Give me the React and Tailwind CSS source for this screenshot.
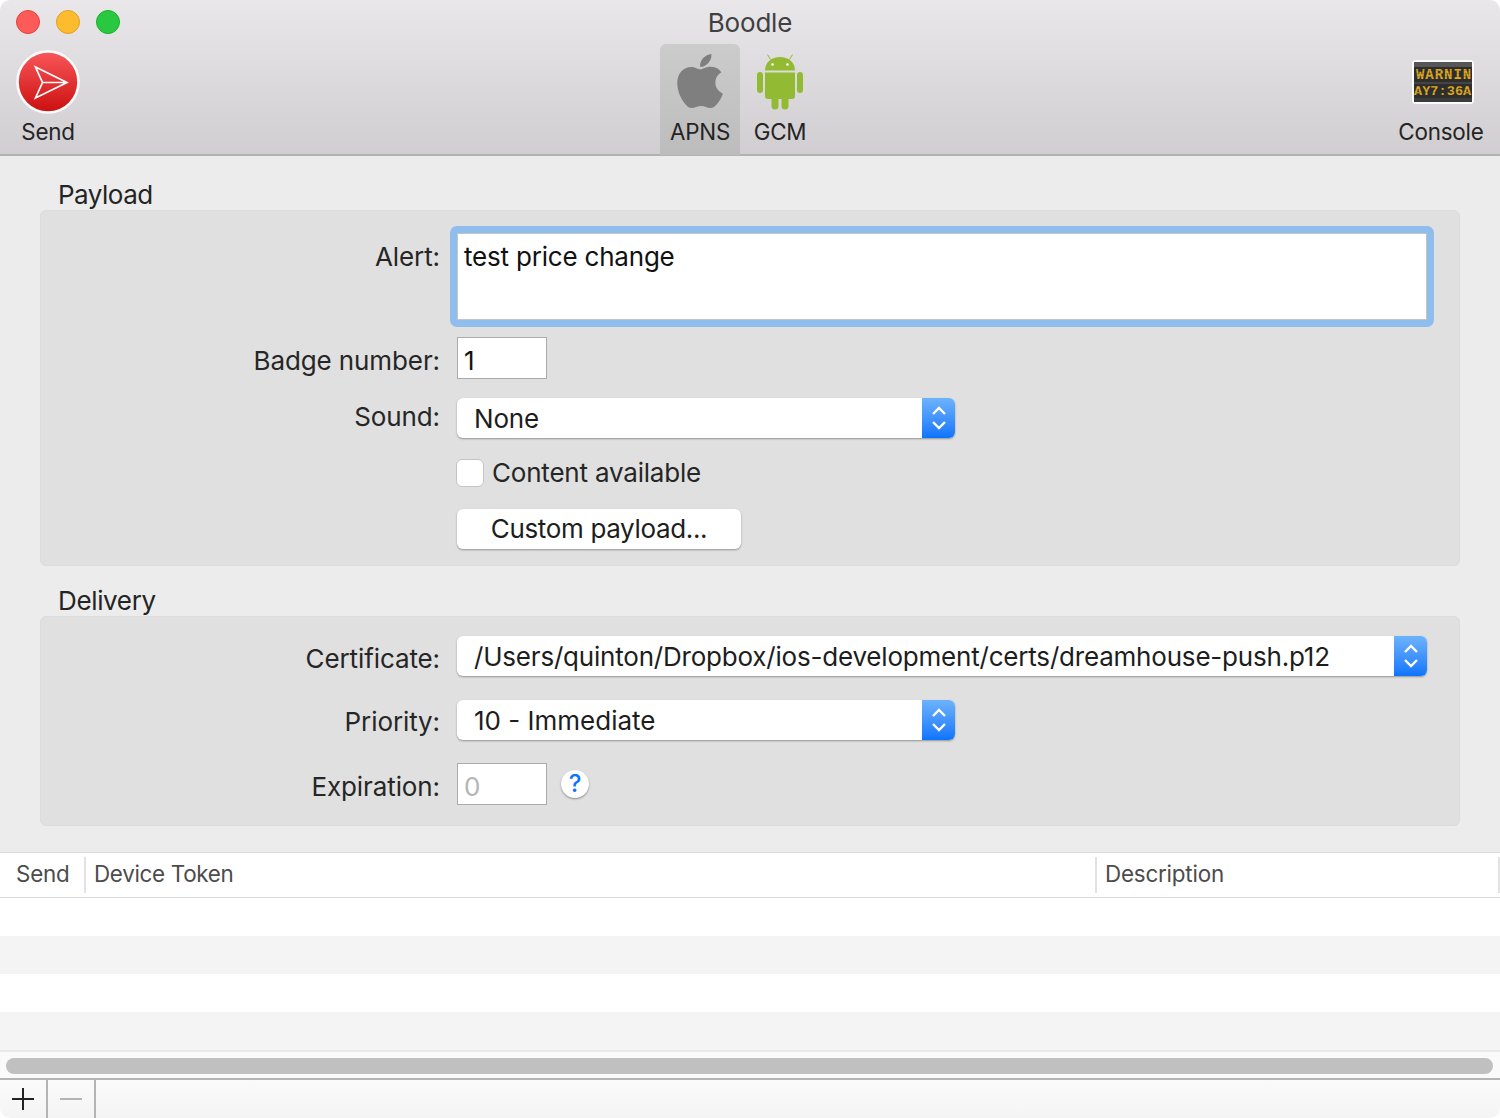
import React from 'react';
import { FaApple } from 'react-icons/fa';

function SendIcon() {
  return (
    <svg width="64" height="64" viewBox="0 0 64 64" className="block">
      <defs>
        <linearGradient id="sendRed" x1="0" y1="0" x2="0" y2="1">
          <stop offset="0" stopColor="#f9575a" />
          <stop offset="1" stopColor="#cb0f0f" />
        </linearGradient>
      </defs>
      <circle cx="32" cy="32" r="30.5" fill="url(#sendRed)" stroke="#fbfbfb" strokeWidth="2.6" />
      <path d="M19.5 17 L51 32.5 L19.5 48 L26.5 32.5 Z M26.5 32.5 H51" fill="none" stroke="#fff" strokeWidth="1.7" strokeLinejoin="miter" />
    </svg>
  );
}

function AndroidIcon() {
  return (
    <svg width="46" height="56" viewBox="0 0 46 56" className="block">
      <g fill="#92bb33">
        <path d="M8 16.5 C8 8 15 3 23 3 C31 3 38 8 38 16.5 Z" />
        <path d="M8 18.5 H38 V42 a3 3 0 0 1 -3 3 H11 a3 3 0 0 1 -3 -3 Z" />
        <rect x="0" y="18" width="6" height="21" rx="3" />
        <rect x="40" y="18" width="6" height="21" rx="3" />
        <rect x="14.5" y="40" width="7" height="15.5" rx="3.5" />
        <rect x="24.5" y="40" width="7" height="15.5" rx="3.5" />
      </g>
      <path d="M13.5 5.5 L10.5 0.5 M32.5 5.5 L35.5 0.5" stroke="#92bb33" strokeWidth="1" />
      <circle cx="15.5" cy="10.5" r="1.3" fill="#fff" />
      <circle cx="30.5" cy="10.5" r="1.3" fill="#fff" />
    </svg>
  );
}

function ConsoleIcon() {
  return (
    <svg width="62" height="44" viewBox="0 0 62 44" className="block ml-[3px]">
      <rect x="1" y="1" width="60" height="42" rx="3" fill="#2e2e2e" stroke="#fbfbfb" strokeWidth="2" />
      <rect x="2" y="2" width="58" height="5" fill="#565656" />
      <rect x="2" y="22" width="58" height="2" fill="#444" />
      <rect x="2" y="38" width="58" height="4" fill="#3c3c3c" />
      <text x="4" y="19" fill="#dfa81e" fontFamily="Liberation Mono" fontWeight="700" fontSize="14" textLength="55">WARNIN</text>
      <text x="2" y="35" fill="#dfa81e" fontFamily="Liberation Mono" fontWeight="700" fontSize="13.5" textLength="57">AY7:36A</text>
      {[10, 13, 16, 26, 29, 32].map((y) => (
        <rect key={y} x="2" y={y} width="58" height="0.5" fill="#2e2e2e" opacity="0.4" />
      ))}
    </svg>
  );
}

function Chevrons() {
  return (
    <svg width="16" height="26" viewBox="0 0 16 26">
      <path d="M2 9 L8 3 L14 9 M2 17 L8 23 L14 17" fill="none" stroke="#fff" strokeWidth="2.4" />
    </svg>
  );
}

function Select({ value, className = '', valueClass = '' }) {
  return (
    <div className={`flex h-10 rounded-[6px] bg-white shadow-[0_1px_2px_rgba(0,0,0,0.35)] overflow-hidden ${className}`}>
      <div className={`flex-1 pl-[17px] leading-[42px] text-[#1d1d1d] ${valueClass}`}>{value}</div>
      <div className="w-[33px] flex items-center justify-center bg-gradient-to-b from-[#6db2fb] to-[#0a74fe]">
        <Chevrons />
      </div>
    </div>
  );
}

function Row({ label, labelClass = '', className = '', children }) {
  return (
    <div className={`flex ${className}`}>
      <div className={`w-[399px] shrink-0 text-right text-[#262626] tracking-[-0.1px] ${labelClass}`}>{label}</div>
      <div className="flex-1 ml-[17px] mr-[32px]">{children}</div>
    </div>
  );
}

function ToolItem({ label, active, className = '', children }) {
  return (
    <div className={`w-20 h-[111px] flex flex-col items-center rounded-t-[6px] ${active ? 'bg-gradient-to-b from-[#cdcccd] to-[#bdbcbd]' : ''} ${className}`}>
      <div className="h-[76px] flex items-center justify-center">{children}</div>
      <div className="-mt-[2px] text-[22.4px] leading-[28px] text-[#242424]">{label}</div>
    </div>
  );
}

const ROWS = ['bg-white', 'bg-[#f4f4f4]', 'bg-white', 'bg-[#f4f4f4]'];

export default function App() {
  return (
    <div className="w-[1500px] h-[1118px] bg-white">
      <div className="w-full h-full flex flex-col overflow-hidden rounded-[10px] text-[26px] font-[Inter,sans-serif] tracking-[-0.2px]">
        {/* title + toolbar */}
        <header className="h-[156px] shrink-0 border-b-2 border-[#b3b2b3] bg-gradient-to-b from-[#e9e7ea] to-[#d0ced0]">
          <div className="grid grid-cols-[1fr_auto_1fr] h-[44px]">
            <div className="flex gap-4 pl-4 pt-[10px]">
              <span className="w-6 h-6 rounded-full bg-[#fc5b57] border border-[#e0443e]" />
              <span className="w-6 h-6 rounded-full bg-[#fdbc2e] border border-[#dfa023]" />
              <span className="w-6 h-6 rounded-full bg-[#28c940] border border-[#1dad2b]" />
            </div>
            <div className="text-[#404040] leading-[46px]">Boodle</div>
          </div>
          <div className="grid grid-cols-[1fr_auto_1fr]">
            <div className="pl-2">
              <ToolItem label="Send" className="!h-[105px]"><SendIcon /></ToolItem>
            </div>
            <div className="flex mr-5">
              <ToolItem label="APNS" active><FaApple className="w-[62px] h-[62px] -mt-[2px] text-[#7f7f7f]" /></ToolItem>
              <ToolItem label="GCM"><AndroidIcon /></ToolItem>
            </div>
            <div className="flex justify-end pr-[19px]">
              <ToolItem label="Console"><ConsoleIcon /></ToolItem>
            </div>
          </div>
        </header>

        {/* form */}
        <main className="h-[696px] shrink-0 bg-[#ececec] px-10">
          <div className="pl-[18px] h-[54px] leading-[78px] text-[#242424] tracking-[-0.5px]">Payload</div>
          <section className="h-[356px] rounded-[6px] border border-[#dcdcdc] bg-[#e0e0e0] pt-[22px]">
            <Row label="Alert:" labelClass="leading-[48px]">
              <div className="-m-[7px] rounded-[7px] bg-[#8fbdee] p-[7px]">
                <div className="h-[87px] border border-[#c4c4c4] bg-white pl-[6px] leading-[46px] text-[#111]">test price change</div>
              </div>
            </Row>
            <Row label="Badge number:" className="mt-[17px]" labelClass="leading-[48px]">
              <div className="w-[90px] h-[42px] border border-[#ababab] bg-white pl-[6px] leading-[46px] text-[#111]">1</div>
            </Row>
            <Row label="Sound:" className="mt-[13px]" labelClass="leading-[38px]">
              <Select value="None" className="w-[498px]" />
            </Row>
            <Row label="" className="mt-[21px]">
              <div className="flex items-center gap-2 -ml-px h-7">
                <span className="w-7 h-7 rounded-[6px] bg-white border border-[#c4c4c4]" />
                <span className="-mt-[2px] text-[#262626]">Content available</span>
              </div>
            </Row>
            <Row label="" className="mt-[22px]">
              <div className="w-[284px] h-10 rounded-[6px] bg-white text-center leading-10 text-[#1d1d1d] tracking-[-0.35px] shadow-[0_1px_2px_rgba(0,0,0,0.35)]">Custom payload...</div>
            </Row>
          </section>
          <div className="pl-[18px] h-[50px] leading-[70px] text-[#242424] tracking-[-0.35px]">Delivery</div>
          <section className="h-[210px] rounded-[6px] border border-[#dcdcdc] bg-[#e0e0e0] pt-[19px]">
            <Row label="Certificate:" labelClass="leading-[46px]">
              <Select value="/Users/quinton/Dropbox/ios-development/certs/dreamhouse-push.p12" />
            </Row>
            <Row label="Priority:" className="mt-[18px]" labelClass="leading-[44px]">
              <Select value="10 - Immediate" className="w-[498px]" valueClass="tracking-[0px]" />
            </Row>
            <Row label="Expiration:" className="mt-[19px]" labelClass="leading-[48px]">
              <div className="flex items-center gap-[14px]">
                <div className="w-[90px] h-[42px] border border-[#ababab] bg-white pl-[6px] leading-[46px] text-[#b5b5b5]">0</div>
                <div className="w-7 h-7 rounded-full bg-white text-center text-[24px] leading-7 font-medium text-[#0a74fe] shadow-[0_1px_2px_rgba(0,0,0,0.4)]">?</div>
              </div>
            </Row>
          </section>
        </main>

        {/* device table */}
        <div className="flex h-[46px] shrink-0 items-center border-y border-[#d9d9d9] bg-white text-[22.4px] text-[#4c4c4c]">
          <div className="w-[86px] h-9 pl-4 leading-[34px] border-r-2 border-[#e2e2e2]">Send</div>
          <div className="w-[1011px] h-9 pl-2 leading-[34px] border-r-2 border-[#e2e2e2] tracking-[-0.3px]">Device Token</div>
          <div className="flex-1 h-9 pl-2 leading-[34px] border-r-2 border-[#e2e2e2]">Description</div>
        </div>
        {ROWS.map((bg, i) => (
          <div key={i} className={`h-[38px] shrink-0 ${bg}`} />
        ))}
        <div className="h-7 shrink-0 border-t-2 border-[#e9e9e9] bg-[#fafafa] pl-[6px] pr-[7px] pt-[6px]">
          <div className="h-4 rounded-full bg-[#c0c0c0]" />
        </div>

        {/* add / remove */}
        <footer className="flex-1 flex border-t-2 border-[#b4b4b4] bg-gradient-to-b from-[#fbfbfb] to-[#f4f4f4]">
          <div className="w-12 border-r-2 border-[#b4b4b4] flex items-center justify-center">
            <svg width="22" height="24" viewBox="0 0 22 24"><path d="M0 12 H22 M11 1 V23" stroke="#232323" strokeWidth="2" /></svg>
          </div>
          <div className="w-12 border-r-2 border-[#b4b4b4] flex items-center justify-center">
            <svg width="22" height="24" viewBox="0 0 22 24"><path d="M0 12 H22" stroke="#b4b4b4" strokeWidth="2" /></svg>
          </div>
        </footer>
      </div>
    </div>
  );
}
